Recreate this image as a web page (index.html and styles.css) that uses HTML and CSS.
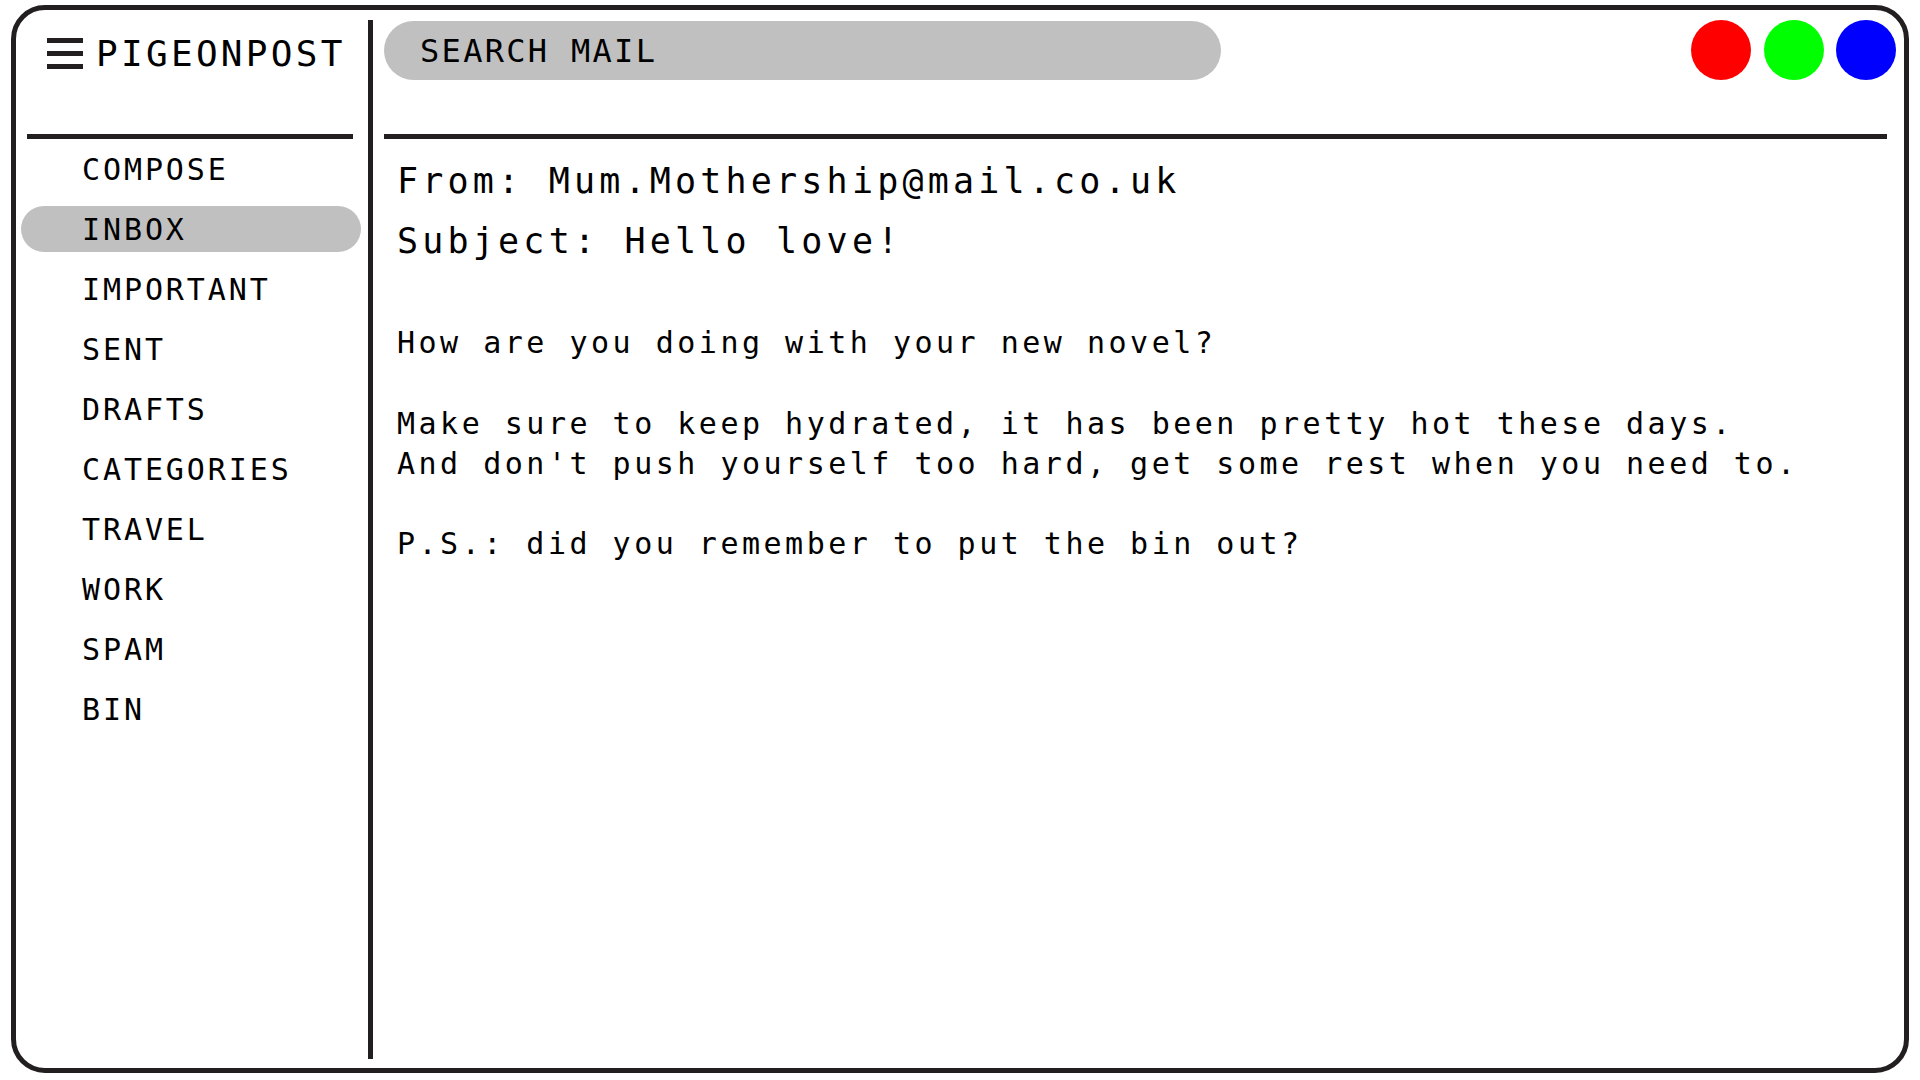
FILE: index.html
```html
<!DOCTYPE html>
<html lang="en">
<head>
<meta charset="utf-8">
<title>PigeonPost</title>
<link rel="stylesheet" href="styles.css">
</head>
<body>
<div class="window">
  <aside class="sidebar">
    <div class="brand">
      <div class="burger"><span></span><span></span><span></span></div>
      <div class="logo">PIGEONPOST</div>
    </div>
    <div class="rule side-rule"></div>
    <nav class="nav">
      <div class="nav-item">COMPOSE</div>
      <div class="nav-item active">INBOX</div>
      <div class="nav-item">IMPORTANT</div>
      <div class="nav-item">SENT</div>
      <div class="nav-item">DRAFTS</div>
      <div class="nav-item">CATEGORIES</div>
      <div class="nav-item">TRAVEL</div>
      <div class="nav-item">WORK</div>
      <div class="nav-item">SPAM</div>
      <div class="nav-item">BIN</div>
    </nav>
  </aside>
  <div class="divider"></div>
  <main class="main">
    <div class="topbar">
      <div class="search">SEARCH MAIL</div>
      <div class="dots">
        <span class="dot red"></span>
        <span class="dot green"></span>
        <span class="dot blue"></span>
      </div>
    </div>
    <div class="rule main-rule"></div>
    <div class="mail">
      <div class="head">From: Mum.Mothership@mail.co.uk</div>
      <div class="head">Subject: Hello love!</div>
      <div class="body">
        <p>How are you doing with your new novel?</p>
        <p>Make sure to keep hydrated, it has been pretty hot these days.<br>And don't push yourself too hard, get some rest when you need to.</p>
        <p>P.S.: did you remember to put the bin out?</p>
      </div>
    </div>
  </main>
</div>
</body>
</html>
```
FILE: styles.css
```css
* { box-sizing: border-box; }
html, body { margin: 0; padding: 0; background: #ffffff; }
body {
  font-family: "DejaVu Sans Mono", "Liberation Mono", monospace;
  color: #000;
}
.window {
  margin: 5px 0 0 11px;
  width: 1898px;
  height: 1068px;
  border: 5px solid #231f20;
  border-radius: 34px;
  padding: 10px 0 9px;
  display: flex;
}
.sidebar {
  width: 352px;
  flex: none;
  display: flex;
  flex-direction: column;
}
.brand {
  height: 67px;
  display: flex;
  align-items: center;
  padding-left: 31px;
}
.burger {
  width: 36px;
  display: flex;
  flex-direction: column;
  gap: 8px;
  margin-right: 13px;
}
.burger span {
  display: block;
  height: 5px;
  background: #231f20;
}
.logo {
  font-size: 36px;
  letter-spacing: 3.3px;
  line-height: 1;
}
.rule {
  height: 5px;
  background: #231f20;
}
.side-rule {
  margin: 47px 15px 0 11px;
}
.nav {
  display: flex;
  flex-direction: column;
  gap: 14px;
  margin: 7px 7px 0 5px;
}
.nav-item {
  height: 46px;
  display: flex;
  align-items: center;
  padding-left: 61px;
  font-size: 30px;
  letter-spacing: 2.9px;
  border-radius: 23px;
}
.nav-item.active { background: #c0c0c0; }
.divider {
  width: 5px;
  flex: none;
  background: #231f20;
}
.main {
  flex: 1;
  display: flex;
  flex-direction: column;
}
.topbar {
  height: 60px;
  display: flex;
  justify-content: space-between;
  padding: 0 8px 0 11px;
}
.search {
  width: 837px;
  height: 59px;
  margin-top: 1px;
  background: #c0c0c0;
  border-radius: 30px;
  display: flex;
  align-items: center;
  padding-left: 36px;
  font-size: 32px;
  letter-spacing: 2.3px;
}
.dots {
  display: flex;
  gap: 12.5px;
}
.dot {
  width: 60px;
  height: 60px;
  border-radius: 50%;
}
.red { background: #ff0000; }
.green { background: #00ff00; }
.blue { background: #0000ff; }
.main-rule {
  margin: 54px 17px 0 11px;
}
.mail {
  padding-left: 24px;
  margin-top: 12px;
}
.head {
  font-size: 35px;
  letter-spacing: 4.2px;
  line-height: 60px;
}
.body {
  margin-top: 52px;
  font-size: 30px;
  letter-spacing: 3.5px;
  line-height: 40.3px;
}
.body p { margin: 0 0 40.3px; }
```
